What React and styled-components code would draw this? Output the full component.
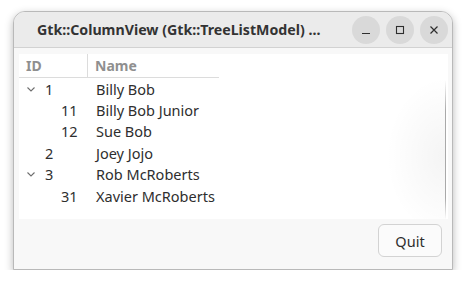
import React from 'react';
import styled, {createGlobalStyle} from 'styled-components';

const rows = [
    {id: '1', name: 'Billy Bob', depth: 0, expander: true},
    {id: '11', name: 'Billy Bob Junior', depth: 1},
    {id: '12', name: 'Sue Bob', depth: 1},
    {id: '2', name: 'Joey Jojo', depth: 0},
    {id: '3', name: 'Rob McRoberts', depth: 0, expander: true},
    {id: '31', name: 'Xavier McRoberts', depth: 1},
];

const Chevron = () => (
    <svg width="16" height="16" viewBox="0 0 16 16">
        <path d="M4.5 6.5 L8 10 L11.5 6.5" fill="none" stroke="#6f6f6f" strokeWidth="1.1" />
    </svg>
);

const App = () => {
    return (
        <>
            <GlobalStyle />
            <Window>
                <TitleBar>
                    <Title>Gtk::ColumnView (Gtk::TreeListModel) ...</Title>
                    <Controls>
                        <CtrlButton>
                            <svg width="16" height="16" viewBox="0 0 16 16">
                                <path d="M4 11.5 H12" stroke="#2e2e2e" strokeWidth="1.2" />
                            </svg>
                        </CtrlButton>
                        <CtrlButton>
                            <svg width="16" height="16" viewBox="0 0 16 16">
                                <rect x="4.5" y="4.5" width="7" height="7" fill="none" stroke="#2e2e2e" strokeWidth="1.1" />
                            </svg>
                        </CtrlButton>
                        <CtrlButton>
                            <svg width="16" height="16" viewBox="0 0 16 16">
                                <path d="M4.5 4.5 L11.5 11.5 M11.5 4.5 L4.5 11.5" stroke="#2e2e2e" strokeWidth="1.2" />
                            </svg>
                        </CtrlButton>
                    </Controls>
                </TitleBar>
                <Body>
                    <ListView>
                        <HeaderRow>
                            <HeaderCell width={ 69 } divider>ID</HeaderCell>
                            <HeaderCell width={ 131 }>Name</HeaderCell>
                        </HeaderRow>
                        { rows.map ( ( r ) => (
                            <Row key={ r.id }>
                                <IdCell>
                                    <Expander depth={ r.depth }>
                                        { r.expander && <Chevron /> }
                                    </Expander>
                                    { r.id }
                                </IdCell>
                                <NameCell>{ r.name }</NameCell>
                            </Row>
                        ) ) }
                        <Overshoot />
                    </ListView>
                    <Footer>
                        <QuitButton>Quit</QuitButton>
                    </Footer>
                </Body>
            </Window>
        </>
    );
};

// ---------- STYLES ----------

const GlobalStyle = createGlobalStyle`
    body {
        margin: 0;
        background: #ffffff;
        font-family: "Noto Sans", "DejaVu Sans", sans-serif;
        color: #2e2e2e;
    }
`;

const Window = styled.div`
    margin: 11px 0 0 13px;
    width: 440px;
    height: 259px;
    box-sizing: border-box;
    border: 1px solid #b9b9b9;
    border-radius: 12px 12px 0 0;
    background: #f8f8f8;
    box-shadow: 0 3px 8px rgba(0, 0, 0, 0.28);
    display: flex;
    flex-direction: column;
    overflow: hidden;
`;

const TitleBar = styled.div`
    height: 35px;
    flex-shrink: 0;
    background: #ebebeb;
    border-bottom: 1px solid #d2d2d2;
    display: flex;
    align-items: center;
    padding: 0 4px 0 23px;
`;

const Title = styled.div`
    flex: 1;
    font-size: 14.2px;
    font-weight: 700;
    color: #333;
    white-space: nowrap;
    overflow: hidden;
`;

const Controls = styled.div`
    display: flex;
    gap: 6px;
`;

const CtrlButton = styled.div`
    width: 28px;
    height: 28px;
    border-radius: 50%;
    background: #d9d9d9;
    display: flex;
    align-items: center;
    justify-content: center;
`;

const Body = styled.div`
    flex: 1;
    display: flex;
    flex-direction: column;
    padding: 6px 4px 0 5px;
`;

const ListView = styled.div`
    position: relative;
    height: 165px;
    background: #ffffff;
    overflow: hidden;
`;

const HeaderRow = styled.div`
    display: flex;
    height: 23px;
    width: 200px;
    border-bottom: 1px solid #dcdcdc;
`;

const HeaderCell = styled.div`
    width: ${ p => p.width }px;
    box-sizing: border-box;
    padding-left: 7px;
    display: flex;
    align-items: center;
    font-size: 14px;
    font-weight: 700;
    color: #8f8f8f;
    border-right: ${ p => p.divider ? '1px solid #dcdcdc' : 'none' };
`;

const Row = styled.div`
    display: flex;
    height: 21.4px;
    align-items: center;
    font-size: 14.5px;
    line-height: 18px;
    color: #2e2e2e;
`;

const IdCell = styled.div`
    width: 69px;
    display: flex;
    align-items: center;
    padding-left: 4px;
    box-sizing: border-box;
`;

const Expander = styled.div`
    width: 16px;
    height: 16px;
    margin-left: ${ p => p.depth * 16 }px;
    margin-right: 6px;
    display: flex;
    align-items: center;
    justify-content: center;
`;

const NameCell = styled.div`
    padding-left: 8px;
    white-space: nowrap;
`;

const Overshoot = styled.div`
    position: absolute;
    right: 2px;
    top: 26px;
    bottom: 0;
    width: 70px;
    background:
        linear-gradient(to bottom, rgba(168, 168, 168, 0), #a9a9a9 22%, #a9a9a9 85%, rgba(168, 168, 168, 0)) right / 1px 100% no-repeat,
        radial-gradient(ellipse 60px 80px at 100% 55%, rgba(0, 0, 0, 0.045), rgba(0, 0, 0, 0) 100%);
`;

const Footer = styled.div`
    flex: 1;
    display: flex;
    justify-content: flex-end;
    align-items: flex-start;
    padding: 5px 6px 0 0;
`;

const QuitButton = styled.button`
    width: 64px;
    height: 33px;
    border: 1px solid #d3d3d3;
    border-radius: 6px;
    background: #fbfbfb;
    font-family: "Noto Sans", "DejaVu Sans", sans-serif;
    font-size: 14.5px;
    color: #2e2e2e;
    padding: 0;
`;

export default App;
